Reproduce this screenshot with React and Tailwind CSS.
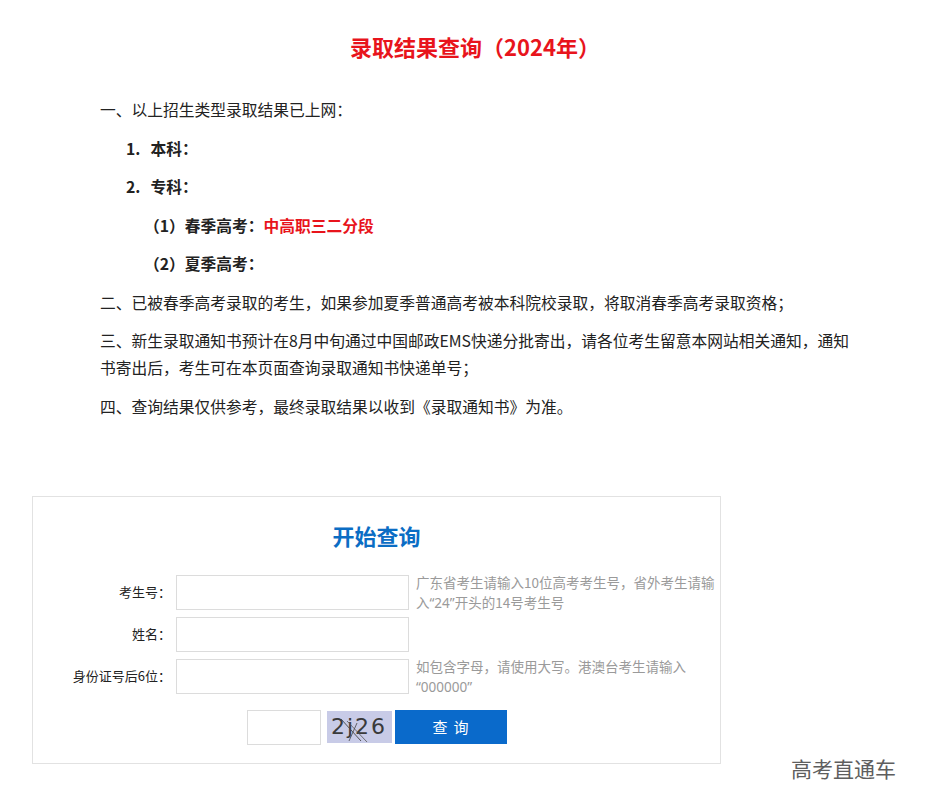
import React from "react";

const FONT = "font-['Noto_Sans_CJK_SC','Noto_Sans',sans-serif]";

const Q = ({ children }) => (
  <span className="inline-block leading-[20px] font-['Noto_Sans',sans-serif]">{children}</span>
);

const Row = ({ label, hint }) => (
  <div className="flex items-center h-[35px]">
    <div className="w-[139px] pr-[1px] text-right text-[13px] text-[#222]">{label}</div>
    <div className="ml-[4px] w-[233px] h-[35px] border border-[#dcdcdc] bg-white" />
    {hint && (
      <p className="ml-[7px] w-[300px] text-[13.5px] leading-[20px] text-[#9a9a9a]">{hint}</p>
    )}
  </div>
);

export default function App() {
  return (
    <div className={`relative w-[928px] min-h-[808px] bg-white ${FONT}`}>
      <div className="ml-[32px] w-[886px]">
        {/* ── Title ── */}
        <h1 className="pt-[31px] text-center text-[22px] leading-[30px] font-bold text-[#e8141c]">
          录取结果查询（2024年）
        </h1>

        {/* ── Notice ── */}
        <div className="mt-[35px] pl-[68px] w-[830px] text-[15.75px] leading-[27px] text-[#222]">
          <p className="mb-[11.5px]">一、以上招生类型录取结果已上网：</p>
          <p className="mb-[11.5px] pl-[26px] font-bold">
            1.<span className="ml-[10px]">本科：</span>
          </p>
          <p className="mb-[11.5px] pl-[26px] font-bold">
            2.<span className="ml-[10px]">专科：</span>
          </p>
          <p className="mb-[11.5px] pl-[44px] font-bold">
            （1）春季高考：<span className="text-[#e8141c]">中高职三二分段</span>
          </p>
          <p className="mb-[11.5px] pl-[44px] font-bold">（2）夏季高考：</p>
          <p className="mb-[11.5px]">
            二、已被春季高考录取的考生，如果参加夏季普通高考被本科院校录取，将取消春季高考录取资格；
          </p>
          <p className="mb-[11.5px] w-[752px]">
            三、新生录取通知书预计在8月中旬通过中国邮政EMS快递分批寄出，请各位考生留意本网站相关通知，通知<wbr />书寄出后，考生可在本页面查询录取通知书快递单号；
          </p>
          <p>四、查询结果仅供参考，最终录取结果以收到《录取通知书》为准。</p>
        </div>

        {/* ── Query form ── */}
        <div className="mt-[76px] w-[689px] border border-[#e2e2e2] pt-[23px] pb-[18px]">
          <h2 className="text-center text-[22px] leading-[30px] font-bold text-[#0b6dc4]">开始查询</h2>

          <div className="mt-[25px] flex flex-col gap-[7px]">
            <Row
              label="考生号："
              hint={
                <>
                  <span>广东省考生请输入10位高考考生号，省外考生请输</span>
                  <wbr />
                  <span>
                    入<Q>“24”</Q>开头的14号考生号
                  </span>
                </>
              }
            />
            <Row label="姓名：" />
            <Row
              label="身份证号后6位："
              hint={
                <>
                  如包含字母，请使用大写。港澳台考生请输入<wbr />
                  <Q>“000000”</Q>
                </>
              }
            />
          </div>

          <div className="mt-[16px] flex items-center justify-center">
            <div className="w-[74px] h-[35px] border border-[#dcdcdc] bg-white" />
            <div className="relative ml-[6px] w-[65px] h-[32px] bg-[#c8cbe7] flex items-center justify-center">
              <span className="font-['DejaVu_Sans',sans-serif] text-[22px] leading-none tracking-[2px] text-[#3a3a3a]">
                2j26
              </span>
              <svg className="absolute inset-0" width="65" height="32" viewBox="0 0 65 32">
                <line x1="14" y1="8" x2="34" y2="30" stroke="#444" strokeWidth="0.9" />
                <line x1="20" y1="10" x2="40" y2="31" stroke="#555" strokeWidth="0.8" />
                <line x1="30" y1="12" x2="22" y2="30" stroke="#444" strokeWidth="0.8" />
              </svg>
            </div>
            <button className="ml-[3px] w-[112px] h-[34px] bg-[#0a6acb] text-white text-[15px] tracking-[6px] pl-[6px]">
              查询
            </button>
          </div>
        </div>
      </div>

      {/* ── Watermark ── */}
      <div className="absolute left-[791px] top-[754px] text-[21px] leading-[28px] text-[#5e5e5e]">
        高考直通车
      </div>
    </div>
  );
}
